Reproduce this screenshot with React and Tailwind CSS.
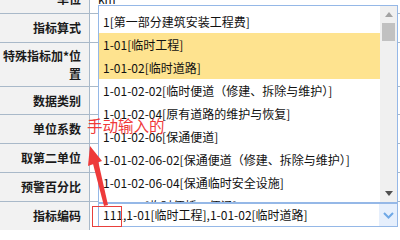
import React from "react";

const rows = [
  { label: "单位", h: "h-[29px]", value: "km" },
  { label: "指标算式", h: "h-[29px]" },
  { label: "特殊指标加*位", label2: "置", h: "h-[44px]" },
  { label: "数据类别", h: "h-[28px]" },
  { label: "单位系数", h: "h-[29px]" },
  { label: "取第二单位", h: "h-[29px]" },
  { label: "预警百分比", h: "h-[29px]" },
];

const items = [
  { t: "1[第一部分建筑安装工程费]" },
  { t: "1-01[临时工程]", sel: true },
  { t: "1-01-02[临时道路]", sel: true },
  { t: "1-01-02-02[临时便道（修建、拆除与维护）]" },
  { t: "1-01-02-04[原有道路的维护与恢复]" },
  { t: "1-01-02-06[保通便道]" },
  { t: "1-01-02-06-02[保通便道（修建、拆除与维护）]" },
  { t: "1-01-02-06-04[保通临时安全设施]" },
  { t: "1-01-04[临时便桥、便涵]" },
];

export default function App() {
  return (
    <div
      className="relative w-[400px] h-[230px] overflow-hidden bg-white text-[12px] text-[#111]"
      style={{ fontFamily: '"Noto Sans CJK SC", "Noto Sans", sans-serif' }}
    >
      <div className="flex flex-col mt-[-15px]">
        {rows.map((r, i) => (
          <div key={i} className={`flex ${r.h} border-b border-[#a9b9c9]`}>
            <div className="w-[90px] shrink-0 bg-[#f2f2f2] border-r border-[#a9b9c9] flex flex-col items-end justify-center pr-[8px] font-bold leading-[18px] text-[#1a1a1a]">
              <span>{r.label}</span>
              {r.label2 && <span>{r.label2}</span>}
            </div>
            <div className="flex-1 flex items-center pl-[8px]">
              {r.value && <span>{r.value}</span>}
            </div>
          </div>
        ))}
        <div className="flex h-[40px]">
          <div className="w-[90px] shrink-0 bg-[#f2f2f2] border-r border-[#a9b9c9] flex items-start justify-end pr-[8px] pt-[5px] font-bold text-[#1a1a1a] leading-[18px]">
            指标编码
          </div>
          <div className="flex-1 pl-[8px] pt-[1px]">
            <div className="flex w-[300px] h-[24px] border border-[#95b8e7] bg-white">
              <div className="flex-1 flex items-center pl-[4px] whitespace-nowrap overflow-hidden">
                111,1-01[临时工程],1-01-02[临时道路]
              </div>
              <div className="w-[18px] h-full bg-[#e6effc] flex items-center justify-center">
                <svg width="11" height="7" viewBox="0 0 11 7">
                  <path d="M1 1 L5.5 5.5 L10 1" fill="none" stroke="#6fa8e6" strokeWidth="2" />
                </svg>
              </div>
            </div>
          </div>
        </div>
      </div>

      {/* dropdown panel */}
      <div className="absolute left-[98px] top-[5px] w-[300px] h-[198px] border border-[#95b8e7] bg-white flex overflow-hidden">
        <div className="flex-1 pt-[4px] overflow-hidden">
          {items.map((it, i) => (
            <div
              key={i}
              className={`h-[23px] flex items-center pl-[4px] whitespace-nowrap ${it.sel ? "bg-[#fee38f]" : ""}`}
            >
              {it.t}
            </div>
          ))}
        </div>
        <div className="w-[17px] h-full bg-[#f0f0f0] flex flex-col items-center">
          <div className="h-[17px] w-full flex items-center justify-center">
            <svg width="8" height="5" viewBox="0 0 8 5">
              <path d="M0 5 L4 0 L8 5 Z" fill="#a3a3a3" />
            </svg>
          </div>
          <div className="w-[13px] h-[18px] bg-[#c1c1c1]" />
          <div className="flex-1" />
          <div className="h-[17px] w-full flex items-center justify-center">
            <svg width="8" height="5" viewBox="0 0 8 5">
              <path d="M0 0 L8 0 L4 5 Z" fill="#505050" />
            </svg>
          </div>
        </div>
      </div>

      {/* annotation */}
      <div className="absolute left-[87px] top-[114px] text-[15.5px] leading-[22px] text-[#f03a3a] whitespace-nowrap">
        手动输入的
      </div>
      <div className="absolute left-[92px] top-[206px] w-[30px] h-[21px] border-[1.5px] border-[#e8403c]" />
      <svg className="absolute left-0 top-0" width="400" height="230" viewBox="0 0 400 230">
        <polygon points="90,146 102,161 88,166" fill="#ee3a3a" />
        <polygon points="92.5,162 98,160.5 108,205 104,206" fill="#ee3a3a" />
      </svg>
    </div>
  );
}
